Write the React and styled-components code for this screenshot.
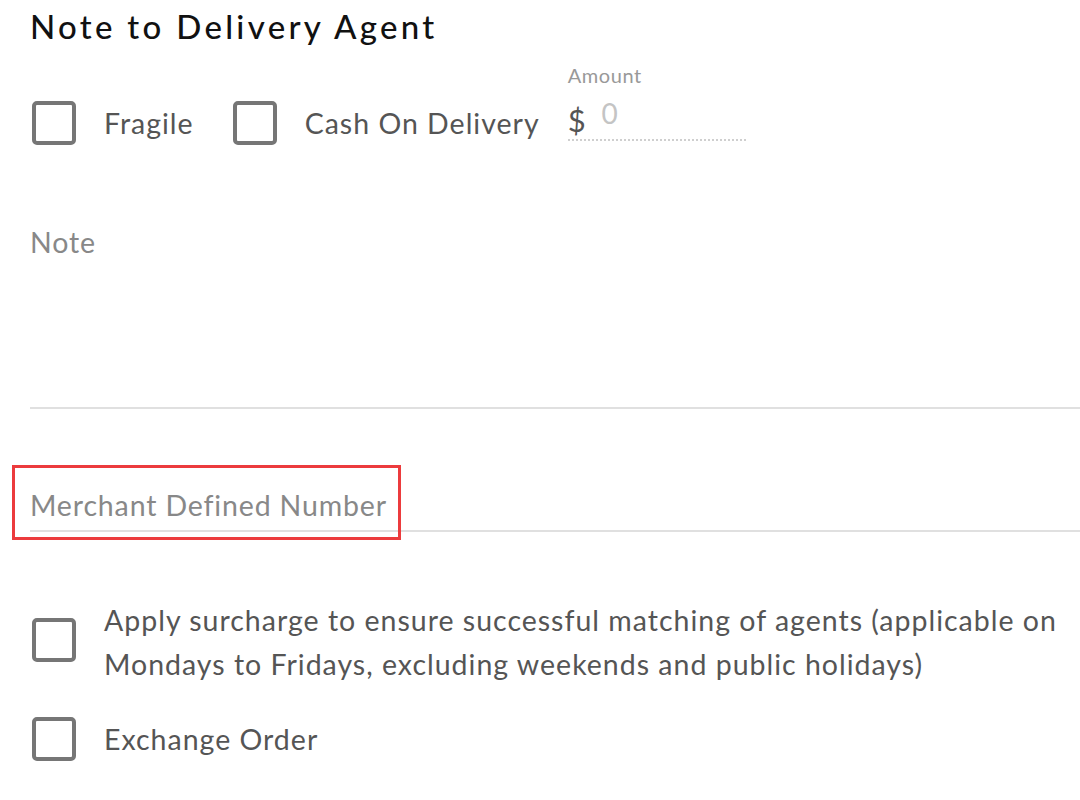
import React from 'react';
import styled, { createGlobalStyle } from 'styled-components';

const GlobalStyle = createGlobalStyle`
	html, body {
		margin: 0;
		padding: 0;
		background: #ffffff;
	}
	body {
		font-family: Lato, "Noto Sans", "Liberation Sans", sans-serif;
	}
`;

const Page = styled.div`
	width: 1080px;
	height: 800px;
	overflow: hidden;
	padding-left: 30px;
	box-sizing: border-box;
`;

const Title = styled.h1`
	margin: 0;
	padding-top: 4px;
	font-size: 33px;
	font-weight: 500;
	line-height: 44px;
	color: #111;
	letter-spacing: 3.3px;
`;

const OptionsRow = styled.div`
	display: flex;
	align-items: center;
	margin-top: 35px;
	height: 80px;
`;

const CheckItem = styled.label`
	display: flex;
	align-items: ${p => (p.top ? 'flex-start' : 'center')};
	margin-right: ${p => p.gap || 0}px;
`;

const Box = styled.span`
	flex: none;
	width: 44px;
	height: 44px;
	box-sizing: border-box;
	border: 4px solid #767676;
	border-radius: 5px;
	margin-left: 2px;
	margin-top: ${p => p.offset || 0}px;
`;

const CheckLabel = styled.span`
	margin-left: 28px;
	font-size: 28.5px;
	line-height: 44px;
	color: #555;
	letter-spacing: 1px;
`;

const AmountField = styled.div`
	display: flex;
	flex-direction: column;
	align-self: flex-start;
	width: 178px;
	margin-top: -20px;
`;

const SmallLabel = styled.span`
	font-size: 20px;
	line-height: 24px;
	color: #999;
	letter-spacing: 0.6px;
`;

const AmountInput = styled.div`
	display: flex;
	align-items: flex-start;
	height: 54px;
	border-bottom: 2px dotted #cfcfcf;
	box-sizing: border-box;
`;

const Currency = styled.span`
	font-size: 31px;
	color: #555;
	margin-right: 16px;
	line-height: 40px;
	margin-top: 13px;
`;

const AmountValue = styled.span`
	font-size: 28px;
	color: #c4c4c4;
	line-height: 32px;
	margin-top: 10px;
`;

const Field = styled.div`
	position: relative;
	display: flex;
	flex-direction: column;
	margin-top: ${p => p.top}px;
	height: ${p => p.height}px;
	border-bottom: 2px solid #e0e0e0;
	box-sizing: border-box;
	margin-right: -40px;
`;

const FieldLabel = styled.span`
	font-size: 28.5px;
	line-height: 44px;
	color: #888;
	letter-spacing: 0.85px;
`;

const Highlight = styled.div`
	position: absolute;
	left: -18px;
	top: -18px;
	width: 389px;
	height: 75px;
	border: 3px solid #ec3b3d;
	box-sizing: border-box;
	pointer-events: none;
`;

const BottomOptions = styled.div`
	display: flex;
	flex-direction: column;
	gap: 31px;
	margin-top: 66px;
`;

const App = () => {
	return (
		<>
			<GlobalStyle />
			<Page>
				<Title>Note to Delivery Agent</Title>
				<OptionsRow>
					<CheckItem gap={37}>
						<Box />
						<CheckLabel>Fragile</CheckLabel>
					</CheckItem>
					<CheckItem gap={28}>
						<Box />
						<CheckLabel>Cash On Delivery</CheckLabel>
					</CheckItem>
					<AmountField>
						<SmallLabel>Amount</SmallLabel>
						<AmountInput>
							<Currency>$</Currency>
							<AmountValue>0</AmountValue>
						</AmountInput>
					</AmountField>
				</OptionsRow>
				<Field top={57} height={189}>
					<FieldLabel>Note</FieldLabel>
				</Field>
				<Field top={74} height={49}>
					<FieldLabel>Merchant Defined Number</FieldLabel>
					<Highlight />
				</Field>
				<BottomOptions>
					<CheckItem top>
						<Box offset={20} />
						<CheckLabel>
							Apply surcharge to ensure successful matching of agents (applicable on
							<br />
							Mondays to Fridays, excluding weekends and public holidays)
						</CheckLabel>
					</CheckItem>
					<CheckItem>
						<Box />
						<CheckLabel>Exchange Order</CheckLabel>
					</CheckItem>
				</BottomOptions>
			</Page>
		</>
	);
};

export default App;
